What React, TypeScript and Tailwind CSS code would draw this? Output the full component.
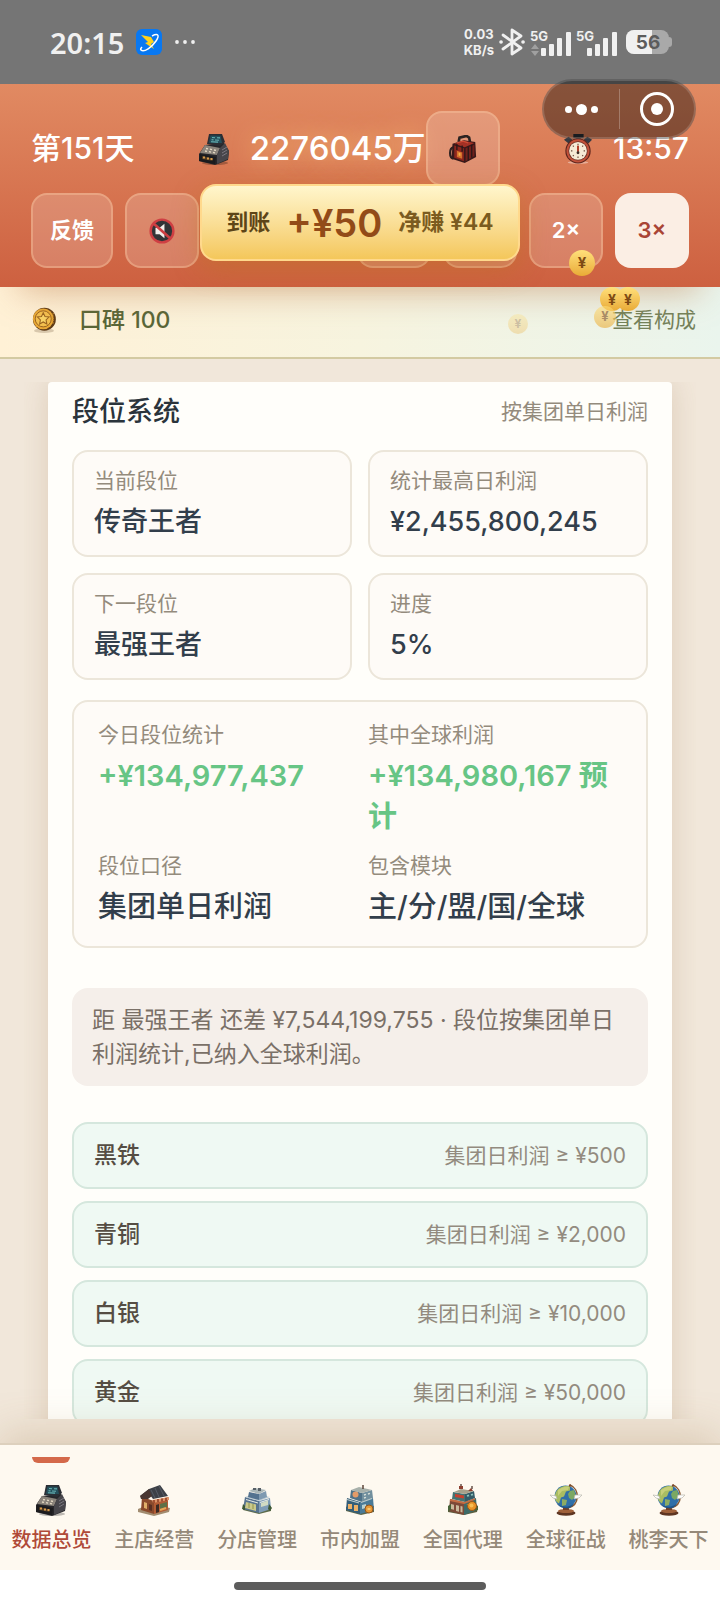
import type { ReactNode } from "react";

type IconProps = { className?: string };

function RegisterIcon({ className }: IconProps) {
  return (
    <svg viewBox="0 0 32 32" className={className} aria-hidden="true" shapeRendering="geometricPrecision">
      <ellipse cx="17" cy="30" rx="13" ry="2" fill="#000" opacity=".25" />
      <path d="M1 21 L7 12 L26 10 L31 18 L30 27 L17 32 L1 28Z" fill="#26262a" />
      <path d="M7 12 L22 15 L19 22 L2 20Z" fill="#8b847b" />
      <path d="M22 15 L27 10 L31 18 L30 26 L19 31 L19 22Z" fill="#47464b" />
      <path d="M24 17l5-3M24 20l5-3M24 23l5-3" stroke="#7b7880" strokeWidth="1" />
      <path d="M2 21 L18 24 L17 31 L1 28Z" fill="#1b1b1e" />
      <path d="M4 23 L15 25.500 L14.500 28 L4 26Z" fill="#4f3a22" />
      <path d="M5 23.500h2v2H5zM9 24.500h2v2H9zM12.500 25h2v2h-2z" fill="#d79b4c" />
      <path d="M8 15.500l2 .4M12 16.200l2 .4M16 17l2 .4M7 18l2 .4M11 18.700l2 .4M15 19.400l2 .4" stroke="#e4d9c4" strokeWidth="1.300" />
      <path d="M11 1 L24 1 L27 9 L22 13 L9 11Z" fill="#2b2e34" />
      <path d="M12.500 2.500 L22.500 2.800 L24 10 L11 9.800Z" fill="#24505c" />
      <path d="M14 4.500l3 .2M19 4.700l3 .2M13.500 6.800l2 .1M17 7l4 .2M13 8.800l7 .3" stroke="#69b3b4" strokeWidth="1.100" />
    </svg>
  );
}

function BackpackIcon({ className }: IconProps) {
  return (
    <svg viewBox="0 0 32 32" className={className} aria-hidden="true">
      <path d="M11 8 L12 3 L20 1 L23 3 L24 8" fill="none" stroke="#2c2422" strokeWidth="3" />
      <path d="M4 10 L17 6 L30 8 L31 25 L18 32 L3 27Z" fill="#39191a" />
      <path d="M6 10 L17 6.500 L29 9 L18 14Z" fill="#a33125" />
      <path d="M6 12 L17 15 L17 30 L6 26Z" fill="#8c261e" />
      <path d="M19 15 L29 11 L29 24 L19 30Z" fill="#70201c" />
      <path d="M9 18 L15 20 L15 27 L9 25Z" fill="#d5702c" />
      <path d="M11 20 L13 20.500 L13 24 L11 23.500Z" fill="#f3b24a" />
      <path d="M9 10v7M15 12v7M22 13v16M26 11v15" stroke="#2a1718" strokeWidth="1.500" />
      <path d="M5 14C0 15 0 26 5 27" fill="none" stroke="#2c2020" strokeWidth="2.500" />
      <path d="M9 9l7-2 6 2" stroke="#cf4a35" strokeWidth="1.500" fill="none" />
    </svg>
  );
}

function StopwatchIcon({ className }: IconProps) {
  return (
    <svg viewBox="0 0 32 32" className={className} aria-hidden="true">
      <ellipse cx="16" cy="30.500" rx="11" ry="1.500" fill="#fff" opacity=".4" />
      <path d="M11 0h11v4H11z" fill="#2a2f36" />
      <path d="M14 4h5v3h-5z" fill="#6b4a40" />
      <path d="M1 6l5-3 4 3-4 4zM22 6l4-3 5 3-4 4z" fill="#353a42" />
      <circle cx="16" cy="18" r="13.500" fill="#5b241c" />
      <circle cx="16" cy="18" r="12.300" fill="#c2513a" />
      <circle cx="16" cy="18" r="10.300" fill="#6d3025" />
      <circle cx="16" cy="18" r="9.500" fill="#f6ead6" />
      <path d="M16 10.500V12M16 24v1.500M8.500 18H10M22 18h1.500M10.500 12.500l1 1M20.500 22.500l1 1M21.500 12.500l-1 1M11.500 22.500l-1 1" stroke="#6b4c3e" strokeWidth="1.200" />
      <path d="M16 12.500V19" stroke="#b2402c" strokeWidth="2.200" />
      <circle cx="16" cy="20" r="1.500" fill="#3a2a26" />
    </svg>
  );
}

function MuteIcon({ className }: IconProps) {
  return (
    <svg viewBox="0 0 32 32" className={className} aria-hidden="true">
      <circle cx="16" cy="16" r="14" fill="#333437" stroke="#cf3f43" strokeWidth="3" />
      <path d="M8 12h5l6-5v18l-6-5H8z" fill="#f3efec" />
      <path d="M6 7l20 18" stroke="#cf3f43" strokeWidth="3.200" />
    </svg>
  );
}

function MedalIcon({ className }: IconProps) {
  return (
    <svg viewBox="0 0 32 34" className={className} aria-hidden="true">
      <ellipse cx="16" cy="31" rx="13" ry="3" fill="#6b5030" opacity=".25" />
      <circle cx="16.500" cy="16" r="15" fill="#5f3c18" />
      <circle cx="15" cy="15.500" r="13.500" fill="#e9a936" />
      <circle cx="15" cy="15.500" r="10.500" fill="#f4c04f" stroke="#9a6420" strokeWidth="1.300" />
      <path d="M15 7.500l2.300 5 5.300.6-3.900 3.700 1 5.400-4.700-2.700-4.700 2.700 1-5.400-3.900-3.700 5.300-.6z" fill="#f9d468" stroke="#9a6420" strokeWidth="1.400" />
      <path d="M28 8v15" stroke="#c5872a" strokeWidth="1.500" strokeDasharray="1.500 1.500" />
    </svg>
  );
}

function ShopIcon({ className }: IconProps) {
  return (
    <svg viewBox="0 0 32 32" className={className} aria-hidden="true">
      <path d="M0 25 L12 20 L32 24 L31 28 L16 32 L0 28Z" fill="#a28d71" />
      <path d="M4 13 L16 17 L16 30 L3 26Z" fill="#8a4a2c" />
      <path d="M16 17 L30 13 L30 26 L16 30Z" fill="#b35c34" />
      <path d="M2 12 L11 5 L22 1 L30 12 L15 15 L12 11Z" fill="#3c4047" />
      <path d="M2 12 L11 5 L14 12 L10 15 L3 15Z" fill="#4a3631" />
      <path d="M13 6l4 8M17 4l4 9M21 2l5 10" stroke="#565c66" strokeWidth="1" />
      <path d="M14 16 L31 13 L31 16 L15 19Z" fill="#dd9367" />
      <path d="M16 16v3M20 15v3M24 14.500v3M28 14v3" stroke="#8d3c25" strokeWidth="1.500" />
      <path d="M18 21 L21 20 L21 28 L18 29Z" fill="#3c2a22" />
      <path d="M22 20 L29 18 L29 23 L22 25Z" fill="#5f7146" />
      <path d="M6 18 L9 19 L9 25 L6 24Z" fill="#e0b06a" />
      <path d="M11 20 L14 21 L14 27 L11 26Z" fill="#5a2f22" />
      <path d="M22 26l6-2" stroke="#e8a757" strokeWidth="2" />
    </svg>
  );
}

function BranchIcon({ className }: IconProps) {
  return (
    <svg viewBox="0 0 32 32" className={className} aria-hidden="true">
      <path d="M2 24 L12 20 L30 22 L30 27 L18 30 L2 26Z" fill="#5d6b4b" />
      <path d="M4 13 L18 17 L18 29 L2 25Z" fill="#57738f" />
      <path d="M18 17 L29 14 L30 25 L18 29Z" fill="#7f9cb6" />
      <path d="M4 13 L14 10 L29 13 L18 17Z" fill="#bccad2" />
      <path d="M8 8 L18 10 L18 16 L7 13Z" fill="#54728f" />
      <path d="M18 10 L25 7 L26 13 L18 16Z" fill="#7f9ab1" />
      <path d="M8 7 L14 4 L25 6 L18 10Z" fill="#aab6b7" />
      <path d="M12 6h3v-2h-3zM17 7h3V4h-3z" fill="#586067" />
      <path d="M5 18 L15 20.500 L15 27 L4 24Z" fill="#cac98a" />
      <path d="M8 19v5M12 20v5" stroke="#8e924f" strokeWidth="1" />
      <path d="M20 19 L27 16.500 L27 21 L20 23Z" fill="#d2dbc3" />
      <path d="M5 15.500l12 3.500M19 18.500l9-3" stroke="#e7ebe6" strokeWidth="1" />
      <path d="M28 20 L31 24 L29 27 L27 25ZM2 20l2 2v4l-3-1z" fill="#3e5835" />
    </svg>
  );
}

function FranchiseIcon({ className }: IconProps) {
  return (
    <svg viewBox="0 0 32 32" className={className} aria-hidden="true">
      <path d="M2 23 L14 19 L30 22 L30 28 L17 31 L2 27Z" fill="#5a654b" />
      <path d="M3 14 L16 18 L16 30 L2 26Z" fill="#355e78" />
      <path d="M16 18 L29 14 L30 26 L16 30Z" fill="#4a7a97" />
      <path d="M7 6 L18 9 L18 18 L6 14Z" fill="#4f7288" />
      <path d="M18 9 L28 6 L29 14 L18 18Z" fill="#72909e" />
      <path d="M7 6 L15 3 L28 6 L18 9Z" fill="#a7b0aa" />
      <path d="M19 5V1" stroke="#5b4438" strokeWidth="1.500" />
      <circle cx="11.500" cy="10.500" r="3" fill="#e49b68" />
      <path d="M3 15.500l12 3.500M17 18.500l11-4" stroke="#bbc9c9" strokeWidth="1.200" />
      <path d="M4 20h4v5H4zM10 21h4v6h-4z" fill="#edb066" />
      <path d="M18 21l4-1v4l-4 1z" fill="#b9d1d1" />
      <path d="M20 11l2-.6M24 10l2-.6M20 14l2-.6" stroke="#d7dfd9" strokeWidth="1.500" />
      <circle cx="25" cy="25" r="4" fill="#e79a37" stroke="#965619" />
      <path d="M23.500 25h3" stroke="#fbd481" strokeWidth="1.500" />
    </svg>
  );
}

function AgencyIcon({ className }: IconProps) {
  return (
    <svg viewBox="0 0 32 32" className={className} aria-hidden="true">
      <path d="M1 24 L12 20 L31 23 L30 28 L17 31 L1 28Z" fill="#5c5f3e" />
      <path d="M3 15 L17 18 L17 31 L2 27Z" fill="#7c4a38" />
      <path d="M17 18 L29 14 L30 26 L17 31Z" fill="#3d6b68" />
      <path d="M6 8 L18 10 L18 18 L5 15Z" fill="#467372" />
      <path d="M18 10 L27 7 L28 14 L18 18Z" fill="#345b66" />
      <path d="M7 8 L14 5 L27 7 L18 10Z" fill="#a7a18b" />
      <path d="M12 5h4V2h-4zM21 7l3-3 2 3z" fill="#8e4030" />
      <path d="M14 2V0M25 5V2" stroke="#513a30" strokeWidth="1.300" />
      <path d="M8 10 L17 11.500 L17 14.500 L8 13Z" fill="#c8402d" />
      <path d="M3 16l14 3 11-4" stroke="#c56d43" strokeWidth="1.800" fill="none" />
      <path d="M4 20l3 .7v5l-3-.7zM9 21l3 .7v6l-3-.7zM13.500 22l2 .5v6l-2-.5z" fill="#c9b99b" />
      <path d="M20 12l2-.7M24 11l2-.7M20 21l3-1" stroke="#8ec3bb" strokeWidth="1.800" />
      <path d="M1 22l3-2v6l-3 1zM28 20l3 2v4l-3 1z" fill="#486339" />
      <circle cx="25" cy="22" r="4.500" fill="#e99426" stroke="#99561a" />
      <circle cx="24.500" cy="21.500" r="2" fill="#f8bd52" />
    </svg>
  );
}

function GlobeIcon({ className }: IconProps) {
  return (
    <svg viewBox="0 0 32 32" className={className} aria-hidden="true">
      <ellipse cx="16" cy="29" rx="9.500" ry="2.800" fill="#5f3622" />
      <ellipse cx="16" cy="27" rx="8" ry="2" fill="#a0613a" />
      <path d="M13 22h6v4h-6z" fill="#70402a" />
      <path d="M20 1C30 5 30 21 18 24" fill="none" stroke="#8a5a34" strokeWidth="1.500" />
      <circle cx="15.500" cy="12.500" r="11" fill="#2f6fa8" />
      <path d="M5 11C7 3 14 1 20 2.500l0 4-4 1-2 5-3 1-2 6C6 18 4 15 5 11z" fill="#a9bd62" />
      <path d="M8 6c4-3 8-4 11-3l-1 3-6 1-4 5z" fill="#c7cf7a" />
      <path d="M20 7l4-1 2 6-4 4-3-2-1-4z" fill="#7ba863" />
      <path d="M12 15l5 1-1 5-4 1z" fill="#8cab63" />
      <path d="M6 18c3 5 13 7 18 1-1 4-5 6-9 5-4 0-7-2-9-6z" fill="#1f5488" />
      <path d="M0 11l6 1 1 3-4-1zM25 11l7 0-3 3-5 1z" fill="#fff" stroke="#b9b7ac" strokeWidth=".7" />
      <circle cx="20" cy="1.500" r="1.200" fill="#7c4b2c" />
    </svg>
  );
}

function Signal({ arrows = false }: { arrows?: boolean }) {
  return (
    <svg viewBox="0 -5 41 33" className="h-[33px] w-[41px]" fill="currentColor" aria-hidden="true">
      <text x="0" y="10" fontSize="13" fontWeight="700">5G</text>
      {arrows && <path d="M1 18l4-5 4 5zM1 20l4 5 4-5z" opacity=".35" />}
      <rect x="11" y="17" width="5" height="8" rx="1" />
      <rect x="19" y="13" width="5" height="12" rx="1" />
      <rect x="27" y="7" width="5" height="18" rx="1" />
      <rect x="36" y="1" width="5" height="24" rx="1" />
    </svg>
  );
}

function StatusBar() {
  return (
    <div className="flex h-[84px] shrink-0 items-center justify-between bg-[#757575] pl-[50px] pr-12 text-[#f0f0f0]">
      <div className="flex items-center gap-3">
        <span className="font-['Noto_Sans',sans-serif] text-[29px] font-semibold leading-none">20:15</span>
        <svg viewBox="0 0 26 26" className="size-[26px]" aria-hidden="true">
          <rect width="26" height="26" rx="6" fill="#0878f2" />
          <path d="M5 6l10 2 3 5-3 2 3 5-9-6 3-1z" fill="#ffd21c" />
          <path d="M16 7c6-3 8-1 4 5-4 6-12 12-15 9-1-1 0-2 1-3" fill="none" stroke="#fff" strokeWidth="1.500" />
        </svg>
        <svg viewBox="0 0 22 6" className="h-[6px] w-[22px]" fill="currentColor" aria-hidden="true">
          <circle cx="3" cy="3" r="1.900" />
          <circle cx="11" cy="3" r="1.900" />
          <circle cx="19" cy="3" r="1.900" />
        </svg>
      </div>
      <div className="flex items-center gap-[5px]">
        <div className="text-center text-[13px] font-bold leading-4">
          <div>0.03</div>
          <div>KB/s</div>
        </div>
        <svg viewBox="0 0 26 28" className="h-7 w-[26px]" fill="none" stroke="currentColor" strokeWidth="2.800" strokeLinejoin="round" strokeLinecap="round" aria-hidden="true">
          <path d="M4 7l18 13-9 6V2l9 6L4 21" />
          <path d="M2 14h.1M24 14h.1" strokeWidth="3.600" />
        </svg>
        <Signal arrows />
        <Signal />
        <svg viewBox="0 0 46 24" className="ml-1 h-6 w-[46px]" aria-hidden="true">
          <path d="M42 7h1a3 3 0 0 1 3 3v4a3 3 0 0 1-3 3h-1z" fill="#a9a9a9" />
          <rect width="43" height="24" rx="8" fill="#a9a9a9" />
          <path d="M8 0h18v24H8a8 8 0 0 1-8-8V8a8 8 0 0 1 8-8z" fill="#f0f0f0" />
          <text x="22" y="19" textAnchor="middle" fontSize="19" fontWeight="700" fill="#5c5c5c">56</text>
        </svg>
      </div>
    </div>
  );
}

function GlassButton({ label, className = "w-[74px]", children }: { label: string; className?: string; children?: ReactNode }) {
  return (
    <button
      type="button"
      aria-label={label}
      className={`flex h-[75px] shrink-0 items-center justify-center rounded-2xl border-2 border-[#fbc9a0]/40 bg-white/18 text-[22px] font-semibold text-white ${className}`}
    >
      {children}
    </button>
  );
}

function FlyingCoin({ className }: { className: string }) {
  return (
    <span className={`absolute flex items-center justify-center rounded-full bg-linear-to-b from-[#ffe07a] to-[#e9ab35] font-bold text-[#7d4a14] ${className}`}>
      ¥
    </span>
  );
}

function Header() {
  return (
    <header className="relative z-10 shrink-0 bg-linear-to-b from-[#e18a62] to-[#cd6040] px-[31px] pb-[19px] pt-[27px] text-white shadow-[0_24px_32px_-20px_rgba(190,120,70,0.5)]">
      <div className="flex items-center justify-between">
        <span className="text-[30px] font-medium">第151天</span>
        <div className="flex items-center">
          <RegisterIcon className="mr-5 size-8" />
          <span className="text-[33px] font-medium [text-shadow:0_0_24px_rgba(255,205,130,0.9)]">2276045万</span>
          <GlassButton label="背包">
            <BackpackIcon className="size-7" />
          </GlassButton>
        </div>
        <div className="flex items-center gap-5">
          <StopwatchIcon className="size-[30px]" />
          <span className="text-[30px] font-medium">13:57</span>
        </div>
      </div>
      <div className="mt-[7px] flex gap-3">
        <GlassButton label="反馈" className="w-[82px]">反馈</GlassButton>
        <GlassButton label="静音">
          <MuteIcon className="size-[26px]" />
        </GlassButton>
        <GlassButton label="暂停" className="ml-auto w-[74px]" />
        <GlassButton label="1×" />
        <GlassButton label="2×">2×</GlassButton>
        <button type="button" className="h-[75px] w-[74px] shrink-0 rounded-2xl bg-[#fbeee4] text-[22px] font-semibold text-[#a94435]">
          3×
        </button>
      </div>

      <div className="absolute left-1/2 top-[100px] flex h-[77px] w-80 -translate-x-1/2 items-center justify-center gap-4 whitespace-nowrap rounded-2xl border-2 border-[#ffd98c] bg-linear-to-b from-[#fff6cc] to-[#f4c75a] font-semibold shadow-[0_8px_28px_rgba(180,120,20,0.35)]">
        <span className="text-[22px] text-[#5d4517]">到账</span>
        <span className="text-[38px] leading-none text-[#924b18]">+¥50</span>
        <span className="text-[23px] text-[#7b5b20]">净赚 ¥44</span>
      </div>

      <FlyingCoin className="right-[125px] top-[166px] size-[26px] text-[15px]" />
      <FlyingCoin className="right-[80px] top-[203px] size-6 text-[14px]" />
      <FlyingCoin className="right-[96px] top-[203px] size-6 text-[14px]" />
      <FlyingCoin className="right-[104px] top-[222px] size-[22px] text-[13px] opacity-60" />
      <FlyingCoin className="right-[192px] top-[230px] size-5 text-[12px] opacity-30" />

      <div className="absolute right-6 top-[-5px] flex h-[60px] w-[154px] items-center rounded-full border-2 border-white/15 bg-black/40">
        <button type="button" aria-label="更多" className="flex flex-1 items-center justify-center gap-1">
          <span className="size-[7px] rounded-full bg-white" />
          <span className="size-[11px] rounded-full bg-white" />
          <span className="size-[7px] rounded-full bg-white" />
        </button>
        <span className="h-10 w-px bg-white/25" />
        <button type="button" aria-label="关闭" className="flex flex-1 items-center justify-center">
          <span className="flex size-[34px] items-center justify-center rounded-full border-[3px] border-white">
            <span className="size-3 rounded-full bg-white" />
          </span>
        </button>
      </div>
    </header>
  );
}

function ReputationBar() {
  return (
    <div className="flex h-[72px] shrink-0 items-center justify-between border-b-2 border-[#d3caa2] bg-linear-to-r from-[#fff1d6] via-[#f7f4df] to-[#eaf5ed] pb-1 pl-[31px] pr-6">
      <div className="flex items-center gap-[22px]">
        <MedalIcon className="size-[26px]" />
        <span className="text-[23px] font-medium text-[#596638]">口碑 100</span>
      </div>
      <a href="#reputation" className="text-[21px] text-[#74825a]">查看构成</a>
    </div>
  );
}

const stats = [
  { label: "当前段位", value: "传奇王者" },
  { label: "统计最高日利润", value: "¥2,455,800,245" },
  { label: "下一段位", value: "最强王者" },
  { label: "进度", value: "5%" },
];

const details = [
  { label: "今日段位统计", value: "+¥134,977,437", positive: true },
  { label: "其中全球利润", value: "+¥134,980,167 预计", positive: true },
  { label: "段位口径", value: "集团单日利润", positive: false },
  { label: "包含模块", value: "主/分/盟/国/全球", positive: false },
];

const ranks = [
  { name: "黑铁", rule: "集团日利润 ≥ ¥500" },
  { name: "青铜", rule: "集团日利润 ≥ ¥2,000" },
  { name: "白银", rule: "集团日利润 ≥ ¥10,000" },
  { name: "黄金", rule: "集团日利润 ≥ ¥50,000" },
];

function RankPanel() {
  return (
    <section className="mx-6 rounded bg-[#fffefa] p-6 pt-3 shadow-[0_0_28px_rgba(150,110,70,0.22)]">
      <div className="flex h-9 items-center justify-between">
        <h2 className="text-[27px] font-medium text-[#2b343b]">段位系统</h2>
        <span className="text-[21px] text-[#948b7d]">按集团单日利润</span>
      </div>

      <dl className="mt-5 grid grid-cols-2 gap-4">
        {stats.map((s) => (
          <div key={s.label} className="h-[107px] rounded-2xl border-2 border-[#ece6da] bg-[#fefbf7] px-5 pt-3">
            <dt className="text-[21px] leading-[34px] text-[#948b7d]">{s.label}</dt>
            <dd className="text-[27px] font-medium leading-[47px] text-[#323e4b]">{s.value}</dd>
          </div>
        ))}
      </dl>

      <dl className="mt-5 grid grid-cols-2 gap-x-4 gap-y-3 rounded-2xl border-2 border-[#ece6da] bg-[#fefbf7] px-6 pb-[19px] pt-4">
        {details.map((d) => (
          <div key={d.label}>
            <dt className="text-[21px] leading-[34px] text-[#948b7d]">{d.label}</dt>
            <dd className={`mt-[3px] text-[29px] leading-[41px] ${d.positive ? "font-semibold text-[#67c585]" : "font-medium text-[#323e4b]"}`}>{d.value}</dd>
          </div>
        ))}
      </dl>

      <p className="mt-10 rounded-2xl bg-[#f5efea] px-5 py-[15px] text-[23px] leading-[34px] text-[#7a7067]">
        距 最强王者 还差 ¥7,544,199,755 · 段位按集团单日利润统计,已纳入全球利润。
      </p>

      <ul className="mt-9 flex flex-col gap-3">
        {ranks.map((r) => (
          <li key={r.name} className="flex h-[67px] items-center justify-between rounded-2xl border-2 border-[#d5e7dd] bg-[#eff9f3] px-5">
            <span className="text-[23px] font-medium text-[#554d43]">{r.name}</span>
            <span className="text-[21px] text-[#938b7f]">{r.rule}</span>
          </li>
        ))}
      </ul>
    </section>
  );
}

const tabs = [
  { label: "数据总览", Icon: RegisterIcon },
  { label: "主店经营", Icon: ShopIcon },
  { label: "分店管理", Icon: BranchIcon },
  { label: "市内加盟", Icon: FranchiseIcon },
  { label: "全国代理", Icon: AgencyIcon },
  { label: "全球征战", Icon: GlobeIcon },
  { label: "桃李天下", Icon: GlobeIcon },
];

function TabBar() {
  return (
    <nav className="relative z-10 grid h-[127px] shrink-0 grid-cols-7 items-start border-t-2 border-[#ddd0bd] bg-[#fef9f0] pt-3 shadow-[0_-8px_40px_rgba(150,110,60,0.25)]">
      {tabs.map(({ label, Icon }, i) => (
        <button
          key={label}
          type="button"
          className={`flex flex-col items-center whitespace-nowrap text-[20px] font-medium ${i === 0 ? "text-[#b04a38]" : "text-[#958979]"}`}
        >
          <span className={`h-[6px] w-[38px] rounded-b-md ${i === 0 ? "bg-[#d4694a]" : ""}`} />
          <Icon className="mt-[21px] size-8" />
          <span className="mt-[9px] leading-[30px]">{label}</span>
        </button>
      ))}
    </nav>
  );
}

export default function App() {
  return (
    <div className="flex h-screen flex-col overflow-hidden bg-[#f1e7da] font-['Inter','Noto_Sans_CJK_SC',sans-serif]">
      <StatusBar />
      <Header />
      <ReputationBar />
      <main className="mx-6 mb-6 mt-[23px] min-h-0 flex-1 overflow-y-auto [scrollbar-width:none]">
        <RankPanel />
      </main>
      <TabBar />
      <div className="relative z-10 flex h-8 shrink-0 items-center justify-center bg-white">
        <span className="h-2 w-[252px] rounded-full bg-[#5c5c5c]" />
      </div>
    </div>
  );
}
